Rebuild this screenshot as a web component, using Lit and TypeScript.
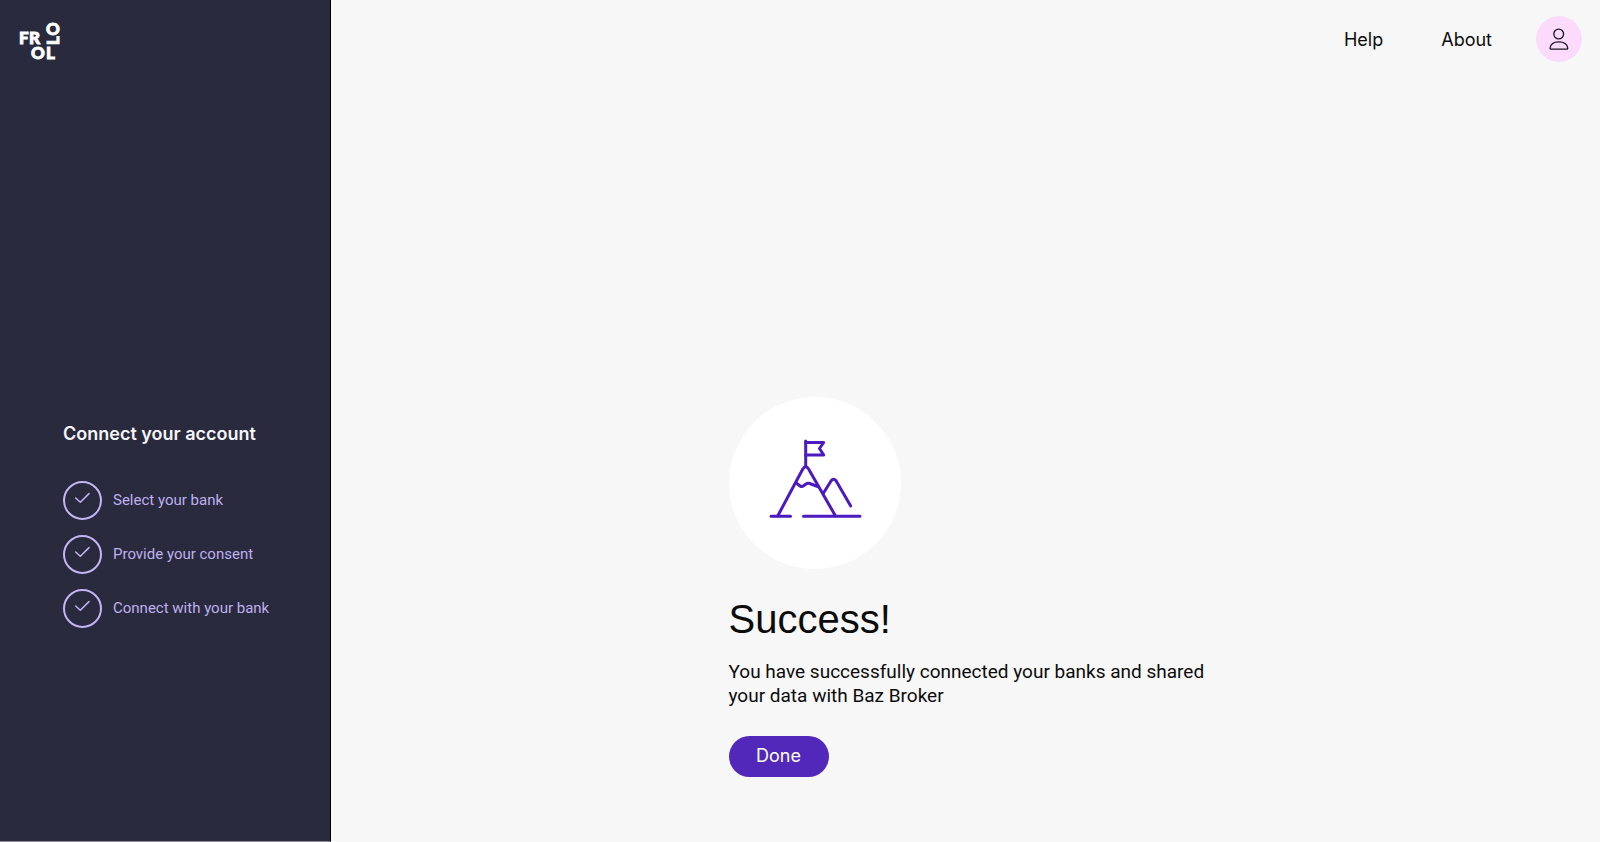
import { LitElement, html, css } from "lit";
import { customElement, property } from "lit/decorators.js";

@customElement("brand-logo")
class BrandLogo extends LitElement {
  static styles = css`
    :host { display: block; }
    .mark { display: block; width: 44px; height: 40px; overflow: visible; }
    .letter {
      font-family: "Lato", "Liberation Sans", sans-serif;
      font-weight: 900;
      font-size: 17px;
      fill: #ffffff;
      stroke: #ffffff;
      stroke-width: 0.9px;
    }
  `;
  render() {
    return html`
      <svg class="mark" viewBox="0 0 44 40" role="img" aria-label="Frollo">
        <text class="letter" x="0" y="22">F</text>
        <text class="letter" x="10" y="22">R</text>
        <text class="letter" x="12" y="37">O</text>
        <text class="letter" x="27" y="37">L</text>
        <text class="letter" x="27" y="13">O</text>
        <text class="letter" transform="translate(40 23) rotate(-90)" x="0" y="0">L</text>
      </svg>
    `;
  }
}

@customElement("step-item")
class StepItem extends LitElement {
  @property() label = "";
  static styles = css`
    :host { display: flex; align-items: center; gap: 11px; }
    .ring {
      box-sizing: border-box;
      width: 39px;
      height: 39px;
      flex: none;
      border: 2px solid #c4b5f5;
      border-radius: 50%;
      display: grid;
      place-items: center;
    }
    .tick { width: 35px; height: 35px; display: block; }
    .label {
      padding-bottom: 2px;
      font-family: "Roboto", "Liberation Sans", sans-serif;
      font-size: 15px;
      line-height: 20px;
      color: #bfb0ee;
      white-space: nowrap;
    }
  `;
  render() {
    return html`
      <span class="ring">
        <svg class="tick" viewBox="0 0 35 35" fill="none" stroke="#c4b5f5" stroke-width="1.5"
          stroke-linecap="round" stroke-linejoin="round" aria-hidden="true">
          <path d="M10.7 15 15.3 19.2 24 10.6" />
        </svg>
      </span>
      <span class="label">${this.label}</span>
    `;
  }
}

@customElement("app-root")
class AppRoot extends LitElement {
  static styles = css`
    :host {
      display: flex;
      min-height: 100vh;
      background: #f7f7f7;
      color: #0c0c0c;
      font-family: "Inter", "Liberation Sans", Arial, sans-serif;
    }
    h1, h2, p, ol { margin: 0; padding: 0; font-weight: 400; }
    .side {
      box-sizing: border-box;
      flex: none;
      width: 331px;
      display: flex;
      flex-direction: column;
      justify-content: space-between;
      padding: 22px 20px 213px 19px;
      border-right: 1px solid #000000;
      border-bottom: 1px solid #8d8899;
      background: #292a3d;
    }
    .progress { padding-left: 44px; }
    .title { font-size: 18px; line-height: 24px; font-weight: 600; color: #f6f6f8; }
    .steps { display: flex; flex-direction: column; gap: 15px; margin-top: 35px; list-style: none; }
    .page { flex: 1; display: flex; flex-direction: column; justify-content: space-between; }
    .top {
      display: flex;
      justify-content: flex-end;
      align-items: center;
      padding: 16px 18px 0;
    }
    .link {
      padding-top: 2px;
      margin-right: 58px;
      font-size: 18px;
      line-height: 24px;
      color: inherit;
      text-decoration: none;
    }
    .link:last-of-type { margin-right: 44px; }
    .user {
      width: 46px;
      height: 46px;
      padding: 0;
      border: 0;
      border-radius: 50%;
      background: #fbdafb;
      display: grid;
      place-items: center;
      cursor: pointer;
    }
    .person { width: 46px; height: 46px; display: block; }
    .result {
      box-sizing: border-box;
      width: 100%;
      max-width: 490px;
      margin: 0 auto;
      padding: 0 0 65px 8px;
    }
    .art { width: 172px; height: 172px; margin-left: 0; border-radius: 50%; background: #ffffff; }
    .peak { width: 172px; height: 172px; display: block; }
    .heading {
      font-family: "Liberation Sans", Arial, sans-serif;
      font-size: 40px;
      line-height: 48px;
      margin-top: 26px;
    }
    .text {
      font-family: "Roboto", "Liberation Sans", sans-serif;
      font-size: 19px;
      line-height: 24px;
      margin-top: 17px;
    }
    .done {
      margin-top: 28px;
      width: 100px;
      height: 41px;
      padding: 0 0 2px;
      border: 0;
      border-radius: 21px;
      background: #5228ba;
      color: #ffffff;
      font-family: inherit;
      font-size: 18px;
      line-height: 24px;
      cursor: pointer;
    }
  `;
  steps = ["Select your bank", "Provide your consent", "Connect with your bank"];
  render() {
    return html`
      <aside class="side">
        <brand-logo></brand-logo>
        <section class="progress">
          <h2 class="title">Connect your account</h2>
          <ol class="steps">
            ${this.steps.map((s) => html`<li><step-item label=${s}></step-item></li>`)}
          </ol>
        </section>
      </aside>
      <div class="page">
        <nav class="top">
          <a class="link" href="#help">Help</a>
          <a class="link" href="#about">About</a>
          <button class="user" aria-label="Account">
            <svg class="person" viewBox="0 0 46 46" fill="none" stroke="#1c1420" stroke-width="1.3" stroke-linejoin="round" aria-hidden="true">
              <circle cx="22.7" cy="18" r="4.9" />
              <path d="M15 33.2Q14 33.2 14.1 32C14.6 28.2 17.4 25.9 22.7 25.9S31.2 28.2 31.7 32Q31.8 33.2 30.8 33.2Z" />
            </svg>
          </button>
        </nav>
        <main class="result">
          <div class="art">
            <svg class="peak" viewBox="0 0 172 172" fill="none" stroke="#4c1abf" stroke-width="3"
              stroke-linecap="round" stroke-linejoin="round" aria-hidden="true">
              <path d="M76.7 69V44" />
              <path d="M76.7 45.5H94.7L90.5 51.5 94.7 58H76.7" />
              <path d="M48.7 119 73.8 72Q76.7 67.5 79.6 72L106.5 119" />
              <path d="M67.5 86.2 71.5 89.3Q73 90 74.6 88.8L77 87Q78.6 85.8 80.6 86.5L88.7 89.5" />
              <path d="M94.5 96 102 84Q104.6 80.4 107.2 84L121.7 109" />
              <path d="M42 119.3H61.5M74.5 119.3H131" />
            </svg>
          </div>
          <h1 class="heading">Success!</h1>
          <p class="text">You have successfully connected your banks and shared your data with Baz Broker</p>
          <button class="done">Done</button>
        </main>
      </div>
    `;
  }
}
